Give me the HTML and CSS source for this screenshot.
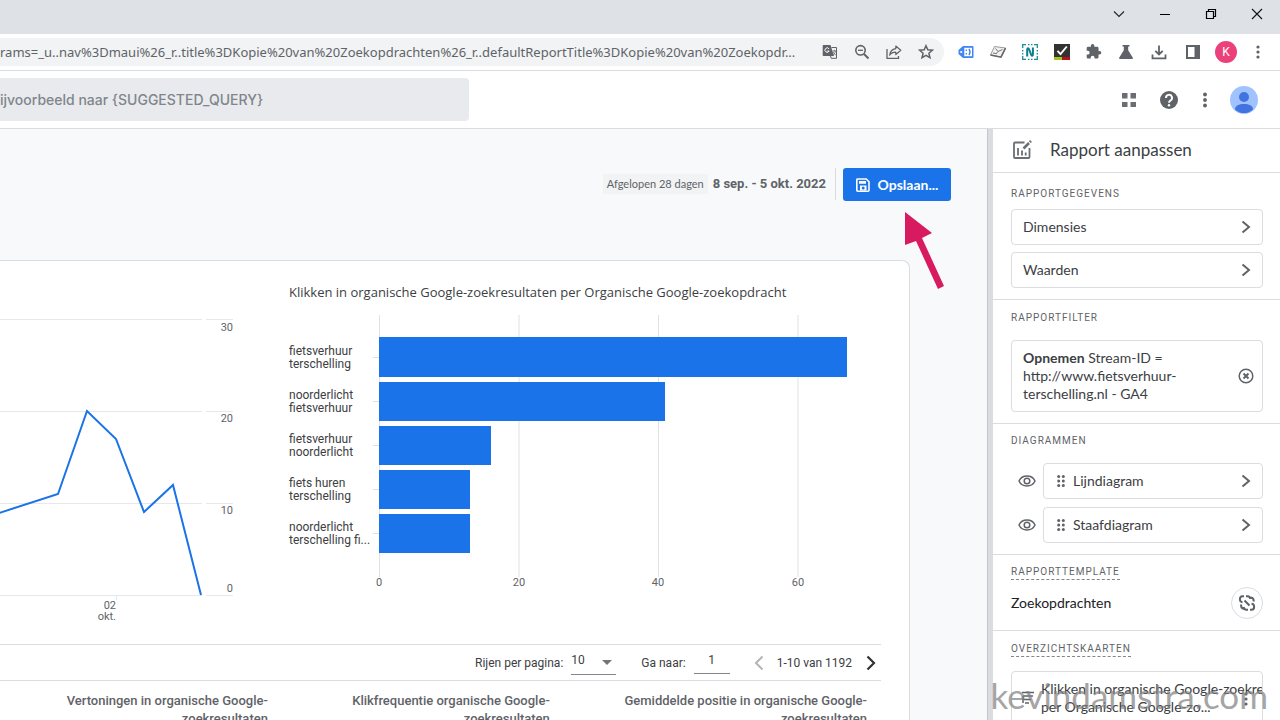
FILE: index.html
```html
<!DOCTYPE html>
<html lang="nl">
<head>
<meta charset="utf-8">
<title>Zoekopdrachten</title>
<link rel="stylesheet" href="styles.css">
</head>
<body>
<div class="tab-strip">
  <button class="window-btn" aria-label="Tabbladen zoeken"><svg width="12" height="12" viewBox="0 0 12 12"><path d="M1 3.500l5 5 5-5" fill="none" stroke="#222" stroke-width="1.100"/></svg></button>
  <button class="window-btn" aria-label="Minimaliseren"><svg width="12" height="12" viewBox="0 0 12 12"><path d="M1 6.500h10" stroke="#000"/></svg></button>
  <button class="window-btn" aria-label="Herstellen"><svg width="12" height="12" viewBox="0 0 12 12"><path d="M1.500 3.500h7v7h-7zM3.500 3.500v-2h7v7h-2" fill="none" stroke="#000" stroke-width="1.200"/></svg></button>
  <button class="window-btn" aria-label="Sluiten"><svg width="12" height="12" viewBox="0 0 12 12"><path d="M1 1l10 10M11 1L1 11" stroke="#111" stroke-width="1.100"/></svg></button>
</div>

<div class="toolbar">
  <div class="omnibox">
    <input class="url" type="text" aria-label="Adres" value="rams=_u..nav%3Dmaui%26_r..title%3DKopie%20van%20Zoekopdrachten%26_r..defaultReportTitle%3DKopie%20van%20Zoekopdr...">
    <button class="tool" aria-label="Vertalen"><svg width="16" height="16" viewBox="0 0 16 16"><path d="M1.500 1h7l3.500 11H1.500A.8.800 0 0 1 .7 11.200V1.800A.8.800 0 0 1 1.500 1z" fill="#5f6368"/><path d="M9.500 3.500h5v10.800H9.200L8.500 12" fill="none" stroke="#5f6368"/><path d="M7 4.800A2.200 2.200 0 1 0 7.200 7H5.300" fill="none" stroke="#fff" stroke-width="1"/><path d="M10.500 7h3.500M12.300 5.800V7M13.400 7c-.3 2-1.200 3.300-2 4M11.300 8.200c.6 1.200 1.300 2 2.500 2.700" fill="none" stroke="#5f6368" stroke-width=".8"/></svg></button>
    <button class="tool" aria-label="Zoomen"><svg width="16" height="16" viewBox="0 0 16 16"><circle cx="6.500" cy="6.300" r="4.700" fill="none" stroke="#5f6368" stroke-width="1.600"/><path d="M4 6.300h5" stroke="#5f6368" stroke-width="1.300"/><path d="M10 10l4.500 4.500" stroke="#5f6368" stroke-width="2"/></svg></button>
    <button class="tool" aria-label="Delen"><svg width="18" height="16" viewBox="0 0 18 16"><path d="M2 5v9.300h11.500V12" fill="none" stroke="#5f6368" stroke-width="1.300"/><path d="M10.800 2l5 4.300-5 4.200V8.200C8 8.200 6 9 4.600 11.200 5 7.500 7.200 5.200 10.800 4.600z" fill="none" stroke="#5f6368" stroke-width="1.200" stroke-linejoin="round"/></svg></button>
    <button class="tool" aria-label="Bladwijzer"><svg width="16" height="16" viewBox="0 0 16 16"><path d="M8 1.700l1.800 4.100 4.600.4-3.500 3 1.100 4.500L8 11.300l-4 2.400 1.100-4.500-3.500-3 4.600-.4z" fill="none" stroke="#5f6368" stroke-width="1.500"/></svg></button>
  </div>
  <button class="tool" aria-label="Tag Assistant"><svg width="16" height="14" viewBox="0 0 16 14"><path d="M5 1h9.500a1 1 0 0 1 1 1v10a1 1 0 0 1-1 1H5L.5 9V5z" fill="#4285f4"/><path d="M6.300 2.800h7.700v8.400H6.300z" fill="#fff"/><circle cx="3.200" cy="7" r="1.100" fill="#fff"/><path d="M8.300 4.500v1.600M8.300 8v1.600M11 3.800q2 3.200 0 6.400" stroke="#4285f4" stroke-width="1.400" fill="none"/></svg></button>
  <button class="tool" aria-label="Extensie"><svg width="18" height="16" viewBox="0 0 18 16"><path d="M5.500 2.500L16.500 4l-4.500 9L1.500 11z" fill="#f1f1f1" stroke="#999"/><path d="M1.500 11l10.500 2.200 4.500-9" fill="none" stroke="#666" stroke-width="1.600"/><path d="M6.500 4.500l2.500 3 4.500-2M4 9l3.500.7 1-2" fill="none" stroke="#777"/></svg></button>
  <button class="tool" aria-label="Extensie N"><svg width="16" height="16" viewBox="0 0 16 16"><path d="M.7 4V.7H4M12 .7h3.300V4M15.300 12v3.300H12M4 15.300H.7V12M6 .7h1.500M9 .7h1.500M6 15.300h1.500M9 15.300h1.500M.7 6v1.500M.7 9v1.500M15.300 6v1.500M15.300 9v1.500" fill="none" stroke="#1a8f98" stroke-width="1.300"/><path d="M5.200 12.500V6c0-2.300 1.300-2.300 2-.5l1.800 5c.7 1.800 1.900 1.500 1.900-.3V3.500" fill="none" stroke="#087f8b" stroke-width="2"/></svg></button>
  <button class="tool" aria-label="Controle"><svg width="16" height="16" viewBox="0 0 16 16"><path d="M0 0h16v16H0z" fill="#333"/><path d="M0 13h8v3H0z" fill="#a4c520"/><path d="M8 13h8v3H8z" fill="#b3141b"/><path d="M3.500 6.800l3 3.300L12.800 2.500" fill="none" stroke="#fff" stroke-width="1.900"/></svg></button>
  <button class="tool" aria-label="Extensies"><svg width="16" height="16" viewBox="1 1 23 23"><path fill="#5f6368" d="M20.500 11H19V7c0-1.100-.9-2-2-2h-4V3.500a2.500 2.500 0 0 0-5 0V5H4c-1.100 0-2 .9-2 2v3.800h1.500a2.700 2.700 0 0 1 0 5.400H2V20c0 1.100.9 2 2 2h3.800v-1.500a2.700 2.700 0 0 1 5.400 0V22H17c1.100 0 2-.9 2-2v-4h1.500a2.500 2.500 0 0 0 0-5z"/></svg></button>
  <button class="tool" aria-label="Labs"><svg width="16" height="16" viewBox="0 0 16 16"><path d="M4.500 1h7v1.600h-1.300v3.600l4.500 7.200a1 1 0 0 1-.9 1.600H2.200a1 1 0 0 1-.9-1.600l4.500-7.200V2.600H4.500z" fill="#5f6368"/></svg></button>
  <button class="tool tool-wide" aria-label="Downloads"><svg width="16" height="16" viewBox="0 0 16 16"><path d="M8 1.500v8.500M4.300 6.800L8 10.500l3.700-3.700M1.500 10.500v3.800h13v-3.800" fill="none" stroke="#5f6368" stroke-width="1.800"/></svg></button>
  <button class="tool tool-wide" aria-label="Zijpaneel"><svg width="14" height="14" viewBox="0 0 14 14"><path d="M1 1h12v12H1z" fill="none" stroke="#5f6368" stroke-width="2"/><path d="M8.500 1H13v12H8.500z" fill="#5f6368"/></svg></button>
  <button class="tool" aria-label="Profiel"><span class="profile">K</span></button>
  <button class="tool" aria-label="Menu"><svg width="4" height="16" viewBox="0 0 4 16"><g fill="#5f6368"><circle cx="2" cy="3" r="1.600"/><circle cx="2" cy="8" r="1.600"/><circle cx="2" cy="13" r="1.600"/></g></svg></button>
</div>

<header class="app-header">
  <input class="search" type="text" aria-label="Zoeken" placeholder="ijvoorbeeld naar {SUGGESTED_QUERY}">
  <nav class="app-actions">
    <button class="action" aria-label="Apps"><svg width="16" height="16" viewBox="0 0 16 16"><path d="M1 1h5.500v5.500H1zM9.500 1H15v5.500H9.500zM1 10h5.500v5H1zM9.500 10H15v5H9.500z" fill="#6b6f73"/></svg></button>
    <button class="action" aria-label="Help"><svg width="18" height="18" viewBox="0 0 18 18"><circle cx="9" cy="9" r="9" fill="#5f6368"/><path d="M6 7a3 3 0 1 1 4.600 2.400C9.600 10 9 10.500 9 11.800" fill="none" stroke="#fff" stroke-width="1.900"/><circle cx="9" cy="14.300" r="1.200" fill="#fff"/></svg></button>
    <button class="action action-narrow" aria-label="Meer"><svg width="4" height="16" viewBox="0 0 4 16"><g fill="#5f6368"><circle cx="2" cy="2.500" r="1.900"/><circle cx="2" cy="8" r="1.900"/><circle cx="2" cy="13.500" r="1.900"/></g></svg></button>
    <button class="account" aria-label="Account"><svg width="28" height="28" viewBox="0 0 28 28"><circle cx="14" cy="14" r="14" fill="#a0c3ff"/><circle cx="14" cy="11" r="5" fill="#4174e0"/><path d="M5 23.500c0-4 4-5.500 9-5.500s9 1.500 9 5.500a13 13 0 0 1-18 0z" fill="#4174e0"/></svg></button>
  </nav>
</header>

<div class="workspace">
  <main class="report">
    <div class="report-head">
      <span class="period">Afgelopen 28 dagen</span>
      <span class="dates">8 sep. - 5 okt. 2022</span>
      <button class="save"><svg width="14" height="14" viewBox="0 0 14 14"><path d="M1.800 1h8.400L13 3.800v8.400a1 1 0 0 1-1 1H1.800a1 1 0 0 1-1-1V1.800a.9.900 0 0 1 1-.8z" fill="none" stroke="#fff" stroke-width="1.600"/><path d="M3 3h7v2.800H3zM4 12.500V7.500h6.500v5" fill="#fff"/><circle cx="7.200" cy="10" r="1.500" fill="#1a73e8"/></svg>Opslaan...</button>
    </div>

    <section class="card">
      <div class="charts">
        <svg class="line-chart" viewBox="0 0 234 320" role="img" aria-label="Lijndiagram">
          <path class="grid" d="M0 19.500h202M206 19.500h27M0 111.500h202M206 111.500h27M0 203.500h202M206 203.500h27M0 295.500h202M206 295.500h27M116.500 296v4"/>
          <polyline class="series" points="-1,213 58,194 87,111 116,139 144,212 173,185 201,295"/>
          <g class="axis" text-anchor="end">
            <text x="233" y="31">30</text><text x="233" y="122">20</text><text x="233" y="214">10</text><text x="233" y="292">0</text>
            <text x="116" y="309">02</text><text x="116" y="320">okt.</text>
          </g>
        </svg>
        <div class="bar-panel">
          <h2 class="chart-title">Klikken in organische Google-zoekresultaten per Organische Google-zoekopdracht</h2>
          <svg class="bar-chart" viewBox="0 0 592 280" role="img" aria-label="Staafdiagram">
            <path class="grid-dark" d="M90.500 5v262M230 5v262M369.500 5v262M509 5v262M84 47.500h6M84 91.500h6M84 135.500h6M84 179.500h6M84 223.500h6"/>
            <g class="bar"><rect x="90" y="27" width="468" height="40"/><rect x="90" y="72" width="286" height="39"/><rect x="90" y="116" width="112" height="39"/><rect x="90" y="160" width="91" height="39"/><rect x="90" y="204" width="91" height="39"/></g>
            <g class="label">
              <text x="0" y="45">fietsverhuur</text><text x="0" y="58">terschelling</text>
              <text x="0" y="89">noorderlicht</text><text x="0" y="102">fietsverhuur</text>
              <text x="0" y="133">fietsverhuur</text><text x="0" y="146">noorderlicht</text>
              <text x="0" y="177">fiets huren</text><text x="0" y="190">terschelling</text>
              <text x="0" y="221">noorderlicht</text><text x="0" y="234">terschelling fi...</text>
            </g>
            <g class="axis" text-anchor="middle"><text x="90" y="276">0</text><text x="230" y="276">20</text><text x="369" y="276">40</text><text x="509" y="276">60</text></g>
          </svg>
        </div>
      </div>

      <div class="pager">
        <label for="rows">Rijen per pagina:</label>
        <select id="rows" class="rows"><option>10</option></select>
        <label for="page" class="page-label">Ga naar:</label>
        <input id="page" class="page" type="text" value="1">
        <button class="step" aria-label="Vorige"><svg width="10" height="16" viewBox="0 0 10 16"><path d="M8.500 1.500L2 8l6.500 6.500" fill="none" stroke="#b4b4b4" stroke-width="2"/></svg></button>
        <span>1-10 van 1192</span>
        <button class="step" aria-label="Volgende"><svg width="10" height="16" viewBox="0 0 10 16"><path d="M1.500 1.500L8 8l-6.500 6.500" fill="none" stroke="#333" stroke-width="2.200"/></svg></button>
      </div>
      <table class="data">
        <thead><tr>
          <th scope="col">Vertoningen in organische Google-zoekresultaten</th>
          <th scope="col">Klikfrequentie organische Google-zoekresultaten</th>
          <th scope="col">Gemiddelde positie in organische Google-zoekresultaten</th>
        </tr></thead>
      </table>
    </section>
    <svg class="pointer" width="42" height="80" viewBox="0 0 42 80"><path d="M1 1l27 21-10 5 22 48-6 3-22-48-11 4z" fill="#d81b60"/></svg>
  </main>

  <div class="splitter"></div>

  <aside class="panel">
    <div class="panel-head">
      <svg width="20" height="20" viewBox="0 0 20 20"><path d="M12.500 2.500H3a1 1 0 0 0-1 1V17a1 1 0 0 0 1 1h13.500a1 1 0 0 0 1-1V8" fill="none" stroke="#6b6f73" stroke-width="1.800"/><path d="M6 8v7.500M10 10.500v5M13.700 12.500v3" stroke="#6b6f73" stroke-width="1.800"/><path d="M11.500 8.500L17 3" stroke="#6b6f73" stroke-width="2.600"/><path d="M17.800 2.200l1.200-1.200" stroke="#6b6f73" stroke-width="2.600"/></svg>
      <h1>Rapport aanpassen</h1>
    </div>

    <section class="group group-first">
      <h3>RAPPORTGEGEVENS</h3>
      <button class="option">Dimensies<svg class="chevron" width="10" height="14" viewBox="0 0 10 14"><path d="M1.500 1.500L8 7l-6.500 5.500" fill="none" stroke="#5f6368" stroke-width="2"/></svg></button>
      <button class="option">Waarden<svg class="chevron" width="10" height="14" viewBox="0 0 10 14"><path d="M1.500 1.500L8 7l-6.500 5.500" fill="none" stroke="#5f6368" stroke-width="2"/></svg></button>
    </section>

    <section class="group group-filter">
      <h3>RAPPORTFILTER</h3>
      <div class="filter">
        <p><b>Opnemen</b> Stream-ID = http://www.fietsverhuur-terschelling.nl - GA4</p>
        <button class="clear" aria-label="Filter verwijderen"><svg width="16" height="16" viewBox="0 0 16 16"><circle cx="8" cy="8" r="6.800" fill="none" stroke="#5f6368" stroke-width="1.500"/><path d="M5.500 5.500l5 5M10.500 5.500l-5 5" stroke="#5f6368" stroke-width="2"/></svg></button>
      </div>
    </section>

    <section class="group group-charts">
      <h3>DIAGRAMMEN</h3>
      <div class="chart-row">
        <button class="eye" aria-label="Lijndiagram tonen"><svg width="18" height="14" viewBox="0 0 18 14"><path d="M1 7c1.500-3.300 4.500-5 8-5s6.500 1.700 8 5c-1.500 3.300-4.500 5-8 5S2.500 10.300 1 7z" fill="none" stroke="#5f6368" stroke-width="1.500"/><circle cx="9" cy="7" r="2.800" fill="none" stroke="#5f6368" stroke-width="1.500"/></svg></button>
        <button class="option"><svg class="grip" width="8" height="12" viewBox="0 0 8 12"><g fill="#5f6368"><circle cx="1.700" cy="1.500" r="1.500"/><circle cx="6.300" cy="1.500" r="1.500"/><circle cx="1.700" cy="6" r="1.500"/><circle cx="6.300" cy="6" r="1.500"/><circle cx="1.700" cy="10.500" r="1.500"/><circle cx="6.300" cy="10.500" r="1.500"/></g></svg>Lijndiagram<svg class="chevron" width="10" height="14" viewBox="0 0 10 14"><path d="M1.500 1.500L8 7l-6.500 5.500" fill="none" stroke="#5f6368" stroke-width="2"/></svg></button>
      </div>
      <div class="chart-row">
        <button class="eye" aria-label="Staafdiagram tonen"><svg width="18" height="14" viewBox="0 0 18 14"><path d="M1 7c1.500-3.300 4.500-5 8-5s6.500 1.700 8 5c-1.500 3.300-4.500 5-8 5S2.500 10.300 1 7z" fill="none" stroke="#5f6368" stroke-width="1.500"/><circle cx="9" cy="7" r="2.800" fill="none" stroke="#5f6368" stroke-width="1.500"/></svg></button>
        <button class="option"><svg class="grip" width="8" height="12" viewBox="0 0 8 12"><g fill="#5f6368"><circle cx="1.700" cy="1.500" r="1.500"/><circle cx="6.300" cy="1.500" r="1.500"/><circle cx="1.700" cy="6" r="1.500"/><circle cx="6.300" cy="6" r="1.500"/><circle cx="1.700" cy="10.500" r="1.500"/><circle cx="6.300" cy="10.500" r="1.500"/></g></svg>Staafdiagram<svg class="chevron" width="10" height="14" viewBox="0 0 10 14"><path d="M1.500 1.500L8 7l-6.500 5.500" fill="none" stroke="#5f6368" stroke-width="2"/></svg></button>
      </div>
    </section>

    <section class="group group-template">
      <h3 class="hinted">RAPPORTTEMPLATE</h3>
      <div class="template">
        <span>Zoekopdrachten</span>
        <button class="unlink" aria-label="Ontkoppelen"><svg width="18" height="18" viewBox="0 0 18 18"><g fill="none" stroke="#5f6368" stroke-width="2"><path d="M4.500 8.200C1.200 8 .8 2.500 4.500 2.200H6M8 2.200h1.500c1.800 0 2.800 1 2.800 2.800M13.500 9.800c3.300.2 3.700 5.700 0 6H12M10 15.800H8.500c-1.800 0-2.800-1-2.800-2.800M13 3.500c2.500.3 2.800 2 2.800 4M3 10.500c0 2.500 1 4 2.500 4.300M6.500 6.500l5 5"/></g></svg></button>
      </div>
    </section>

    <section class="group group-cards">
      <h3 class="hinted">OVERZICHTSKAARTEN</h3>
      <div class="overview">
        <svg class="overview-icon" width="12" height="14" viewBox="0 0 12 14"><path d="M0 1.500h12M1 5h10M1 8.500h8M3 12h4M1 5v7" fill="none" stroke="#5f6368" stroke-width="1.500"/></svg>
        <div class="overview-text">Klikken in organische Google-zoekresultaten<br>per Organische Google-zo...</div>
        <button class="overview-more" aria-label="Meer opties"><svg width="4" height="14" viewBox="0 0 4 14"><g fill="#5f6368"><circle cx="2" cy="2" r="1.600"/><circle cx="2" cy="7" r="1.600"/><circle cx="2" cy="12" r="1.600"/></g></svg></button>
      </div>
    </section>
  </aside>
</div>
<div class="watermark">kevindamstra.com</div>
</body>
</html>
```
FILE: styles.css
```css
* { box-sizing: border-box; }

body {
  margin: 0;
  height: 100vh;
  display: flex;
  flex-direction: column;
  overflow: hidden;
  position: relative;
  background: #fff;
  color: #3c4043;
  font-family: Roboto, sans-serif;
  font-size: 12px;
}

button, input, select {
  font: inherit;
  color: inherit;
  border: 0;
  padding: 0;
  margin: 0;
  background: none;
  border-radius: 0;
  outline: none;
}

h1, h2, h3, p { margin: 0; font-weight: 400; }
svg { flex: none; display: block; }

.tab-strip {
  height: 34px;
  flex: none;
  display: flex;
  justify-content: flex-end;
  background: #dee1e6;
}
.window-btn {
  width: 46px;
  height: 28px;
  display: grid;
  place-items: center;
}

.toolbar {
  height: 37px;
  flex: none;
  display: flex;
  align-items: center;
  padding-right: 6px;
  border-bottom: 1px solid #dadce0;
}
.omnibox {
  flex: 1;
  min-width: 0;
  height: 28px;
  display: flex;
  align-items: center;
  padding-right: 2px;
  margin-right: 6px;
  background: #f1f3f4;
  border-radius: 0 14px 14px 0;
}
.url {
  flex: 1;
  min-width: 0;
  font-family: "Noto Sans", sans-serif;
  font-size: 13px;
  color: #5f6368;
}
.tool {
  width: 32px;
  height: 28px;
  flex: none;
  display: grid;
  place-items: center;
}
.tool-wide { width: 34px; }
.profile {
  width: 22px;
  height: 22px;
  border-radius: 50%;
  background: #ec407a;
  color: #fff;
  font-size: 12px;
  line-height: 22px;
}

.app-header {
  height: 58px;
  flex: none;
  display: flex;
  align-items: center;
  justify-content: space-between;
  padding-right: 22px;
  border-bottom: 1px solid #dadce0;
}
.search {
  width: 469px;
  height: 43px;
  border-radius: 0 4px 4px 0;
  background: #e8eaed;
  font-family: Inter, sans-serif;
  font-size: 14px;
  font-weight: 500;
}
.search::placeholder { color: #80868b; }
.app-actions { display: flex; align-items: center; }
.action {
  width: 40px;
  height: 40px;
  display: grid;
  place-items: center;
}
.action-narrow { width: 32px; }
.account { margin-left: 9px; }

.workspace {
  flex: 1;
  min-height: 0;
  display: flex;
}
.report {
  flex: 1;
  min-width: 0;
  position: relative;
  overflow: hidden;
  background: #f8f9fb;
}
.report-head {
  height: 131px;
  display: flex;
  align-items: flex-start;
  justify-content: flex-end;
  padding: 39px 36px 0 0;
  line-height: 32px;
}
.period {
  padding: 0 4px;
  margin: 6px 5px 0 0;
  background: #f1f3f4;
  line-height: 20px;
  font-family: Lato, sans-serif;
  font-size: 11px;
  color: #5f6368;
}
.dates {
  padding-right: 9px;
  margin-right: 7px;
  border-right: 1px solid #dadce0;
  font-size: 13px;
  font-weight: 700;
  color: #5f6368;
}
.save {
  width: 108px;
  height: 33px;
  display: flex;
  align-items: center;
  justify-content: center;
  gap: 8px;
  border-radius: 3px;
  background: #1a73e8;
  color: #fff;
  font-family: Lato, sans-serif;
  font-size: 14px;
  font-weight: 700;
  line-height: 18px;
}

.card {
  margin-right: 77px;
  padding-right: 28px;
  background: #fff;
  border: 1px solid #dadce0;
  border-width: 1px 1px 0 0;
  border-radius: 0 8px 0 0;
}
.charts {
  display: grid;
  grid-template-columns: minmax(0, 234fr) minmax(0, 592fr);
  column-gap: 55px;
  padding-bottom: 24px;
}
.line-chart { width: 100%; margin-top: 39px; overflow: visible; }
.bar-chart { width: 100%; overflow: visible; }
.chart-title {
  padding: 22px 0 9px;
  font-family: "Open Sans", sans-serif;
  font-size: 13px;
  line-height: 18px;
}
.grid { stroke: #e6e8ea; fill: none; }
.grid-dark { stroke: #dfe1e4; fill: none; }
.series { fill: none; stroke: #1a73e8; stroke-width: 2; }
.axis { font-size: 11px; fill: #5f6368; }
.label { font-size: 12px; fill: #3c4043; }
.bar { fill: #1a73e8; }

.pager {
  height: 37px;
  display: flex;
  align-items: center;
  justify-content: flex-end;
  padding-right: 4px;
  border: 1px solid #dadce0;
  border-width: 1px 0;
}
.rows {
  width: 45px;
  height: 24px;
  margin-left: 8px;
  padding-bottom: 5px;
  appearance: none;
  border-bottom: 1px solid #80868b;
  background: url("data:image/svg+xml,%3Csvg xmlns='http://www.w3.org/2000/svg' width='10' height='5'%3E%3Cpath d='M0 0h10L5 5z' fill='%23757575'/%3E%3C/svg%3E") no-repeat right 4px top 9px;
}
.page-label { margin-left: 25px; }
.page {
  width: 36px;
  height: 22px;
  margin: 0 23px 0 8px;
  padding-bottom: 4px;
  border-bottom: 1px solid #80868b;
  text-align: center;
}
.step {
  width: 12px;
  height: 24px;
  display: grid;
  place-items: center;
}
.step + span { margin: 0 13px 0 12px; }

.data {
  width: 100%;
  table-layout: fixed;
  border-collapse: collapse;
}
.data th {
  width: 32%;
  padding: 11px 14px 11px 24px;
  text-align: right;
  font-size: 13px;
  font-weight: 500;
  line-height: 18px;
  color: #5f6368;
}
.data th:last-child { width: 36%; }

.pointer { position: absolute; right: 41px; top: 82px; }

.splitter {
  width: 6px;
  flex: none;
  background: #dadce0;
  border-left: 1px solid #c4c7c9;
}

.panel {
  width: 287px;
  flex: none;
  overflow: hidden;
  font-family: Lato, sans-serif;
  font-size: 14px;
}
.panel-head {
  height: 44px;
  display: flex;
  align-items: center;
  gap: 18px;
  padding: 0 0 2px 19px;
  border-bottom: 1px solid #dadce0;
}
.panel-head h1 { font-size: 17px; color: #3c4043; }

.group {
  padding: 10px 17px 11px 18px;
  border-bottom: 1px solid #dadce0;
}
.group h3 {
  width: fit-content;
  font-family: Roboto, sans-serif;
  font-size: 10px;
  line-height: 14px;
  letter-spacing: 1px;
  color: #5f6368;
}
.group .hinted { border-bottom: 1px dashed #80868b; }
.group-first { padding-top: 14px; }
.group-first h3 { margin-bottom: 8px; }
.group-filter, .group-cards { padding-top: 11px; }

.option {
  width: 100%;
  height: 36px;
  display: flex;
  align-items: center;
  padding: 0 11px 1px;
  border: 1px solid #dadce0;
  border-radius: 4px;
  text-align: left;
}
.option + .option { margin-top: 7px; }
.chevron { margin-left: auto; }
.grip { margin: 0 8px 0 2px; }

.filter {
  display: flex;
  align-items: center;
  justify-content: space-between;
  margin-top: 15px;
  padding: 8px 8px 8px 11px;
  border: 1px solid #dadce0;
  border-radius: 4px;
  line-height: 18px;
}
.filter b { font-weight: 700; }
.filter p { width: 170px; }

.chart-row {
  display: flex;
  align-items: center;
  gap: 7px;
  margin-top: 8px;
}
h3 + .chart-row { margin-top: 15px; }
.eye { padding-left: 7px; }

.template {
  display: flex;
  align-items: center;
  justify-content: space-between;
  margin-top: 7px;
  color: #202124;
}
.template span { padding-bottom: 2px; }
.unlink {
  width: 32px;
  height: 32px;
  display: grid;
  place-items: center;
  border: 1px solid #dadce0;
  border-radius: 50%;
}

.overview {
  position: relative;
  display: flex;
  align-items: center;
  gap: 7px;
  height: 72px;
  margin-top: 14px;
  padding: 0 0 18px 10px;
  border: 1px solid #dadce0;
  border-radius: 4px;
}
.overview-text {
  flex: 1;
  min-width: 0;
  overflow: hidden;
  white-space: nowrap;
  line-height: 18px;
}
.overview-more { position: absolute; right: 14px; top: 20px; }

.watermark {
  position: absolute;
  right: 12px;
  bottom: 5px;
  font-family: Lato, sans-serif;
  font-weight: 400;
  font-size: 35px;
  line-height: 40px;
  color: #808080;
  opacity: .7;
}
```
